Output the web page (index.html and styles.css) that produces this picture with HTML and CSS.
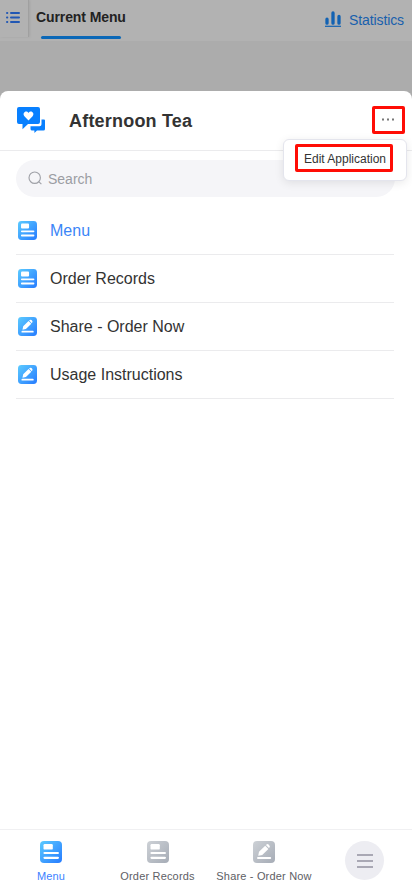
FILE: index.html
```html
<!DOCTYPE html>
<html lang="en">
<head>
<meta charset="utf-8">
<title>Afternoon Tea</title>
<link rel="stylesheet" href="styles.css">
</head>
<body>
<svg class="defs" width="0" height="0">
  <defs>
    <linearGradient id="blue" x1="0" y1="0" x2="1" y2="1"><stop offset="0" stop-color="#5ccbff"/><stop offset="1" stop-color="#267bff"/></linearGradient>
    <linearGradient id="gray" x1="0" y1="0" x2="1" y2="1"><stop offset="0" stop-color="#cdd1d6"/><stop offset="1" stop-color="#a6acb6"/></linearGradient>
    <symbol id="form" viewBox="0 0 22 22">
      <rect width="22" height="22" rx="4"/>
      <rect x="3.5" y="3" width="9.3" height="5.6" rx="1.2" fill="#fff"/>
      <path d="M4.5 12h13.4M4.5 16.8h13.4" stroke="#fff" stroke-width="2.2" stroke-linecap="round"/>
    </symbol>
    <symbol id="pen" viewBox="0 0 22 22">
      <rect width="22" height="22" rx="4"/>
      <path d="M5.2 14.8l.8-4 6.2-6.1 3.2 3.2-6.2 6.1zM12.9 4l.6-.5q1.1-.8 2.1.1l.8.8q.9 1 .1 2.1l-.6.6z" fill="#fff"/>
      <path d="M5 17h12.2" stroke="#fff" stroke-width="2" stroke-linecap="round"/>
    </symbol>
  </defs>
</svg>
<div class="app">
  <header class="topbar">
    <div class="views">
      <svg width="14" height="12" viewBox="0 0 14 12" stroke="#2157b4" stroke-width="2" stroke-linecap="round"><path d="M1 1h.3M1 5.5h.3M1 10h.3M5 1h8M5 5.5h8M5 10h8"/></svg>
    </div>
    <div class="tab"><span class="tab-label">Current Menu</span><i class="tab-line"></i></div>
    <div class="stats">
      <svg width="16" height="16" viewBox="0 0 16 16" stroke="#1262b3"><path d="M2 8.2v4M8 2v10.2M14 5.4v6.8" stroke-width="3.3" stroke-linecap="round"/><path d="M0 15.3h16" stroke-width="1.2"/></svg>
      <span class="stats-label">Statistics</span>
    </div>
  </header>
  <main class="sheet">
    <div class="head">
      <svg class="logo" width="29" height="27" viewBox="0 0 29 27">
        <path d="M2 0h19q2 0 2 2v13q0 2-2 2H11l-5.5 5.2V17H2q-2 0-2-2V2q0-2 2-2z" fill="#0880ff"/>
        <path d="M11.5 13.4L7.4 9.2C4.8 6 9.2 2.5 11.5 6c2.3-3.5 6.7 0 4.1 3.2z" fill="#fff"/>
        <path d="M24.5 12.5H27q1 0 1 1V22q0 1.6-1.6 1.6H20L17.4 26v-2.4h-2.2q-1.7 0-1.7-1.6v-2.7h9q2 0 2-2z" fill="#0880ff"/>
      </svg>
      <h1 class="title">Afternoon Tea</h1>
      <button class="more"><svg width="13" height="3" viewBox="0 0 13 3" fill="#777"><path d="M0 .5h2v2H0zM5 .5h2v2H5zM10 .5h2v2h-2z"/></svg></button>
      <div class="popup"><span class="edit">Edit Application</span></div>
    </div>
    <div class="search">
      <svg width="15" height="15" viewBox="0 0 15 15" fill="none" stroke="#a0a2a8" stroke-width="1.15"><circle cx="6.7" cy="6.7" r="5.7"/><path d="M10.7 10.7l2.7 2.5"/></svg>
      <span class="search-label">Search</span>
    </div>
    <ul class="list">
      <li class="row active"><svg class="row-icon"><use href="#form"/></svg><span>Menu</span></li>
      <li class="row"><svg class="row-icon"><use href="#form"/></svg><span>Order Records</span></li>
      <li class="row"><svg class="row-icon"><use href="#pen"/></svg><span>Share - Order Now</span></li>
      <li class="row"><svg class="row-icon"><use href="#pen"/></svg><span>Usage Instructions</span></li>
    </ul>
    <nav class="nav">
      <div class="item current"><svg class="nav-icon"><use href="#form"/></svg><span>Menu</span></div>
      <div class="item"><svg class="nav-icon"><use href="#form"/></svg><span>Order Records</span></div>
      <div class="item"><svg class="nav-icon"><use href="#pen"/></svg><span>Share - Order Now</span></div>
      <div class="item-more"><div class="round"><svg width="16" height="14" viewBox="0 0 16 14" stroke="#9291a0" stroke-width="1.5"><path d="M0 1h16M0 7h16M0 13h16"/></svg></div></div>
    </nav>
  </main>
</div>
</body>
</html>
```
FILE: styles.css
```css
* { box-sizing: border-box; }
body { margin: 0; font-family: "Liberation Sans", Arial, sans-serif; color: #333; }
svg { display: block; flex: none; }
span, h1 { white-space: nowrap; }
.defs { position: absolute; }
.app { width: 412px; height: 893px; background: #acacac; display: flex; flex-direction: column; overflow: hidden; }
.topbar { height: 41px; flex: none; margin-bottom: 50px; background: #b2b2b2; display: flex; align-items: flex-start; }
.views { width: 29px; height: 37px; padding: 12px 0 0 6px; border-right: 1px solid #a0a0a0; box-shadow: 1px 0 2px #a5a5a5; }
.tab { width: 90px; margin-left: 7px; padding-top: 8px; }
.tab-label { display: block; height: 28px; line-height: 18px; font-size: 14px; font-weight: bold; color: #222; letter-spacing: -.1px; }
.tab-line { display: block; width: 80px; height: 3px; margin-left: 5px; border-radius: 2px; background: #0b68b7; }
.stats { margin-left: auto; padding: 11px 8px 0 0; display: flex; gap: 8px; color: #1860ad; }
.stats-label { font-size: 14px; line-height: 18px; letter-spacing: -.1px; }
.sheet { flex: 1; min-height: 0; background: #fff; border-radius: 8px 8px 0 0; display: flex; flex-direction: column; }
.head { position: relative; height: 60px; flex: none; border-bottom: 1px solid #ebebed; padding: 0 7px 0 17px; display: flex; align-items: center; }
.logo { margin-top: -1px; }
.title { margin: 0 0 0 23px; font-size: 18px; line-height: 24px; letter-spacing: .2px; }
.more { margin: -2px 0 0 auto; width: 33px; height: 28px; padding: 0; border: 3px solid #ff0d05; border-radius: 2px; background: #fff; display: flex; align-items: center; justify-content: center; }
.popup { position: absolute; right: 5px; top: 48px; width: 124px; height: 42px; padding: 6px 12px; background: #fff; border: 1px solid #e4e5ed; border-radius: 6px; box-shadow: 0 2px 10px rgba(0,0,0,.09); }
.edit { display: block; width: 98px; height: 28px; margin-left: -1px; margin-top: -2px; border: 3px solid #ff0d05; border-radius: 2px; font-size: 12px; line-height: 25px; text-align: center; text-indent: 2px; }
.search { height: 37px; flex: none; margin: 9px 17px 10px 16px; border-radius: 19px; background: #f5f5f8; display: flex; align-items: center; padding-left: 12px; gap: 5px; color: #9b9da3; font-size: 14px; }
.list { list-style: none; margin: 0 18px 0 16px; padding: 0; }
.row { height: 48px; border-bottom: 1px solid #ebebed; display: flex; align-items: center; gap: 13px; padding-left: 2px; font-size: 16px; }
.row-icon { width: 19px; height: 19px; fill: url(#blue); }
.active { color: #3b86f7; }
.nav { height: 64px; flex: none; margin-top: auto; border-top: 1px solid #f0f0f2; display: flex; }
.item { padding-top: 11px; display: flex; flex-direction: column; align-items: center; font-size: 11px; line-height: 14px; letter-spacing: .18px; color: #5e6065; }
.item:first-child { width: 102px; }
.item:nth-child(2) { width: 111px; }
.item:nth-child(3) { width: 102px; }
.nav-icon { width: 22px; height: 22px; fill: url(#gray); margin-bottom: 6px; }
.current { color: #3b7fff; }
.current .nav-icon { fill: url(#blue); }
.item-more { flex: 1; padding: 11px 0 0 30px; }
.round { width: 39px; height: 39px; border-radius: 50%; background: #ededf2; display: flex; align-items: center; justify-content: center; }
```
